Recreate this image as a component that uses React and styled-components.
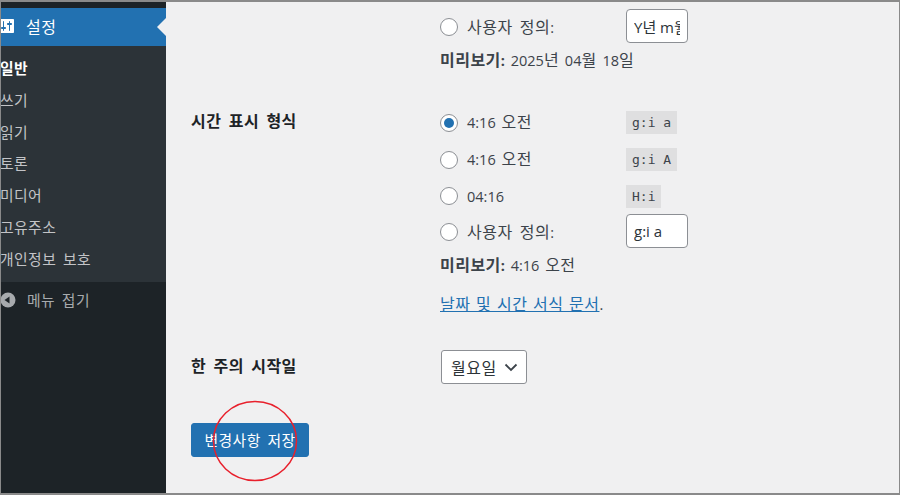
import React from 'react';
import styled, { createGlobalStyle } from 'styled-components';

const GlobalStyle = createGlobalStyle`
   html, body { margin: 0; padding: 0; }
   body {
      width: 900px;
      height: 495px;
      overflow: hidden;
      font-family: "Open Sans", "Noto Sans CJK KR", sans-serif;
      font-size: 14.5px;
      word-spacing: 2px;
      color: #3c434a;
      background: #f0f0f1;
   }
`;

// hangul runs a bit wider than the latin around them in the screenshot
const Ko = styled.span`
   font-family: "Noto Sans CJK KR", sans-serif;
   font-size: ${p => (p.$small ? 14.8 : 16)}px;
   line-height: 1;
   letter-spacing: 0.03em;
   word-spacing: 0.2em;
`;

const Frame = styled.div`
   box-sizing: border-box;
   width: 900px;
   height: 495px;
   display: flex;
   overflow: hidden;
   border: 1px solid #8a8a8a;
   border-top-width: 2px;
   border-bottom-width: 2px;
`;

const Sidebar = styled.nav`
   flex: none;
   width: 165px;
   display: flex;
   flex-direction: column;
   background: #1d2327;
   padding-top: 6px;
`;

const ActiveItem = styled.div`
   position: relative;
   box-sizing: border-box;
   height: 38px;
   padding-bottom: 2px;
   display: flex;
   align-items: center;
   gap: 10px;
   background: #2271b1;
   color: #fff;
   &::after {
      content: "";
      position: absolute;
      right: 0;
      top: 10px;
      border: 9px solid transparent;
      border-left-width: 0;
      border-right-color: #f0f0f1;
   }
`;

const IconClip = styled.span`
   width: 15px;
   height: 20px;
   overflow: hidden;
   display: flex;
   justify-content: flex-end;
`;

const SubMenu = styled.ul`
   list-style: none;
   margin: 0;
   padding: 7px 0 0;
   height: 236px;
   box-sizing: border-box;
   background: #2c3338;
`;

const SubItem = styled.li`
   height: 31.8px;
   line-height: 31px;
   margin-left: -1px;
   white-space: nowrap;
   color: ${p => (p.$active ? '#fff' : '#c3c4c7')};
   font-weight: ${p => (p.$active ? 700 : 400)};
`;

const Collapse = styled.div`
   display: flex;
   align-items: center;
   gap: 11px;
   height: 36px;
   color: #a7aaad;
`;

const Main = styled.main`
   flex: 1;
   padding-left: 25px;
   display: flex;
   flex-direction: column;
   min-width: 0;
`;

const FormRow = styled.div`
   display: grid;
   grid-template-columns: 249px 1fr;
   padding-top: ${p => p.$top || 0}px;
`;

const Label = styled.div`
   font-weight: 700;
   color: #1d2327;
   line-height: 20px;
   padding-top: ${p => p.$top || 0}px;
`;

const Options = styled.div`
   display: flex;
   flex-direction: column;
`;

const Option = styled.label`
   display: grid;
   grid-template-columns: 186px auto;
   align-items: center;
   height: ${p => p.$h || 37}px;
`;

const RadioText = styled.span`
   display: flex;
   align-items: center;
   gap: 9px;
`;

const Radio = styled.span`
   box-sizing: border-box;
   width: 18px;
   height: 18px;
   border-radius: 50%;
   border: 1px solid #8c8f94;
   background: #fff;
   display: flex;
   align-items: center;
   justify-content: center;
   &::before {
      content: "";
      display: ${p => (p.$checked ? 'block' : 'none')};
      width: 10px;
      height: 10px;
      border-radius: 50%;
      background: #2271b1;
   }
`;

const Code = styled.code`
   justify-self: start;
   font-family: "DejaVu Sans Mono", "Liberation Mono", monospace;
   font-size: 13px;
   line-height: 23px;
   padding: 0 6px;
   word-spacing: 0;
   background: rgba(0, 0, 0, 0.07);
`;

const TextInput = styled.input`
   box-sizing: border-box;
   width: 62px;
   height: 34px;
   margin-bottom: 2px;
   padding: 0 7px;
   border: 1px solid #8c8f94;
   border-radius: 4px;
   background: #fff;
   color: #2c3338;
   font: inherit;
   font-size: 15px;
   word-spacing: 0;
`;

const Preview = styled.p`
   margin: 0;
   line-height: 20px;
   padding-top: ${p => p.$top || 0}px;
   b { font-weight: 700; }
`;

const DocLink = styled.p`
   margin: 0;
   padding-top: 19px;
   line-height: 20px;
   a { color: #2271b1; text-decoration: underline; }
   ${Ko} { word-spacing: 0.1em; }
`;

const Select = styled.div`
   box-sizing: border-box;
   width: 86px;
   height: 34px;
   margin-left: 1px;
   display: flex;
   align-items: center;
   justify-content: space-between;
   padding: 0 7px 0 9px;
   border: 1px solid #8c8f94;
   border-radius: 3px;
   background: #fff;
   color: #2c3338;
`;

const SubmitWrap = styled.div`
   position: relative;
   padding-top: 39px;
   width: 118px;
`;

const Submit = styled.button`
   display: block;
   box-sizing: border-box;
   width: 118px;
   height: 34px;
   border: 1px solid #2271b1;
   border-radius: 3px;
   background: #2271b1;
   color: #fff;
   font: inherit;
   padding: 0;
`;

const Circle = styled.svg`
   position: absolute;
   left: 21px;
   top: 16px;
`;

const SettingsIcon = () => (
   <svg width="20" height="20" viewBox="0 0 20 20" fill="#fff" style={{ flex: 'none' }}>
      <path d="M18 16V4c0-.55-.45-1-1-1H3c-.55 0-1 .45-1 1v12c0 .55.45 1 1 1h14c.55 0 1-.45 1-1zM8 11h1c.55 0 1 .45 1 1s-.45 1-1 1H8v1.5c0 .28-.22.5-.5.5s-.5-.22-.5-.5V13H6c-.55 0-1-.45-1-1s.45-1 1-1h1V5.5c0-.28.22-.5.5-.5s.5.22.5.5V11zm5-2h-1c-.55 0-1-.45-1-1s.45-1 1-1h1V5.5c0-.28.22-.5.5-.5s.5.22.5.5V7h1c.55 0 1 .45 1 1s-.45 1-1 1h-1v5.5c0 .28-.22.5-.5.5s-.5-.22-.5-.5V9z" />
   </svg>
);

const CollapseIcon = () => (
   <svg width="15" height="20" viewBox="5 0 15 20" style={{ flex: 'none' }}>
      <circle cx="12" cy="10" r="7.5" fill="#a7aaad" />
      <path d="M13.5 6.5v7L8.5 10z" fill="#1d2327" />
   </svg>
);

const Chevron = () => (
   <svg width="16" height="16" viewBox="0 0 16 16" fill="none" stroke="#3c434a" strokeWidth="1.8">
      <path d="M2.5 5.5 8 11l5.5-5.5" />
   </svg>
);

const menu = ['일반', '쓰기', '읽기', '토론', '미디어', '고유주소', '개인정보 보호'];

function App() {
   return (
      <>
         <GlobalStyle />
         <Frame>
            <Sidebar>
               <ActiveItem>
                  <IconClip><SettingsIcon /></IconClip>
                  <Ko>설정</Ko>
               </ActiveItem>
               <SubMenu>
                  {menu.map((m, i) => (
                     <SubItem key={m} $active={i === 0}><Ko $small>{m}</Ko></SubItem>
                  ))}
               </SubMenu>
               <Collapse>
                  <IconClip><CollapseIcon /></IconClip>
                  <Ko $small>메뉴 접기</Ko>
               </Collapse>
            </Sidebar>
            <Main>
               <FormRow $top={7}>
                  <div />
                  <Options>
                     <Option $h={34}>
                        <RadioText><Radio /><span><Ko>사용자 정의</Ko>:</span></RadioText>
                        <TextInput readOnly value="Y년 m월 d일" />
                     </Option>
                     <Preview $top={8}><b><Ko>미리보기</Ko>:</b> 2025<Ko>년</Ko> 04<Ko>월</Ko> 18<Ko>일</Ko></Preview>
                  </Options>
               </FormRow>
               <FormRow $top={33}>
                  <Label $top={8}><Ko>시간 표시 형식</Ko></Label>
                  <Options>
                     <Option><RadioText><Radio $checked /><span>4:16 <Ko>오전</Ko></span></RadioText><Code>g:i a</Code></Option>
                     <Option><RadioText><Radio /><span>4:16 <Ko>오전</Ko></span></RadioText><Code>g:i A</Code></Option>
                     <Option $h={36}><RadioText><Radio />04:16</RadioText><Code>H:i</Code></Option>
                     <Option $h={34}>
                        <RadioText><Radio /><span><Ko>사용자 정의</Ko>:</span></RadioText>
                        <TextInput readOnly value="g:i a" />
                     </Option>
                     <Preview $top={8}><b><Ko>미리보기</Ko>:</b> 4:16 <Ko>오전</Ko></Preview>
                     <DocLink><a href="#doc"><Ko>날짜 및 시간 서식 문서</Ko></a>.</DocLink>
                  </Options>
               </FormRow>
               <FormRow $top={35}>
                  <Label $top={7}><Ko>한 주의 시작일</Ko></Label>
                  <Select><Ko>월요일</Ko><Chevron /></Select>
               </FormRow>
               <SubmitWrap>
                  <Submit><Ko $small>변경사항 저장</Ko></Submit>
                  <Circle width="86" height="82" viewBox="0 0 86 82" fill="none">
                     <ellipse cx="43" cy="41" rx="41.5" ry="39.5" stroke="#e8202c" strokeWidth="1.5" />
                  </Circle>
               </SubmitWrap>
            </Main>
         </Frame>
      </>
   );
}

export default App;
